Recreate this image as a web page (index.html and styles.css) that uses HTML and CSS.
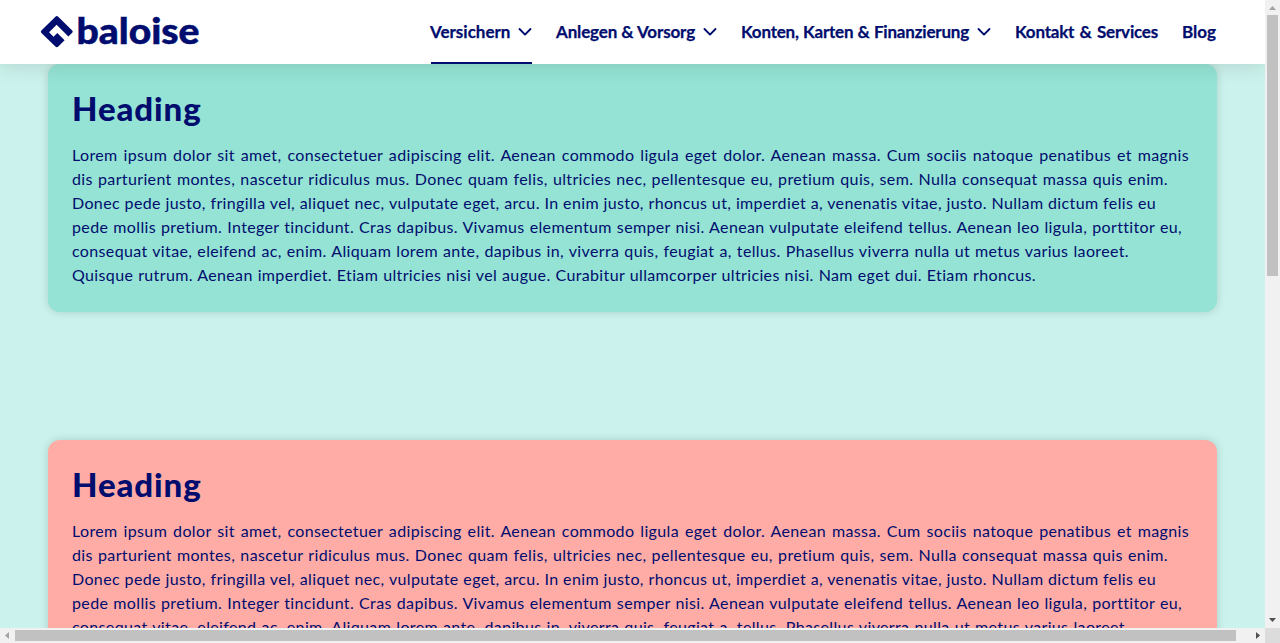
FILE: index.html
```html
<!DOCTYPE html>
<html lang="de">
<head>
<meta charset="utf-8">
<title>Baloise</title>
<link rel="stylesheet" href="styles.css">
</head>
<body>
<div class="window">
  <div class="viewport">
    <header class="navbar">
      <svg class="logo" width="162" height="44" viewBox="0 -4 162 44" role="img" aria-label="baloise">
        <path class="logo-mark" d="M15.4 2.7Q16.8 1.3 18.2 2.7L32.2 16.4Q33.4 17.6 32.2 18.8L28.4 22.6L16.6 10.7L9.1 18.2L13.5 22.7L17.3 18.9L24.6 26.3L18.3 32.6Q16.8 34.1 15.4 32.6L1.4 18.9Q.2 17.7 1.4 16.5Z"/>
        <text class="logo-text" x="36.500" y="29.500" textLength="123" lengthAdjust="spacingAndGlyphs">baloise</text>
      </svg>
      <nav class="menu">
        <a class="item active"><span class="t1">Versichern</span><svg class="chevron" width="14" height="10" viewBox="0 0 14 10"><path d="M1.5 2L7 7.6L12.5 2"/></svg></a>
        <a class="item"><span class="t2">Anlegen &amp; Vorsorg</span><svg class="chevron" width="14" height="10" viewBox="0 0 14 10"><path d="M1.5 2L7 7.6L12.5 2"/></svg></a>
        <a class="item"><span class="t3">Konten, Karten &amp; Finanzierung</span><svg class="chevron" width="14" height="10" viewBox="0 0 14 10"><path d="M1.5 2L7 7.6L12.5 2"/></svg></a>
        <a class="item"><span class="t4">Kontakt &amp; Services</span></a>
        <a class="item"><span class="t5">Blog</span></a>
      </nav>
    </header>
    <main class="content">
      <section class="card green">
        <h1>Heading</h1>
        <div class="copy">
          <div class="l1">Lorem ipsum dolor sit amet, consectetuer adipiscing elit. Aenean commodo ligula eget dolor. Aenean massa. Cum sociis natoque penatibus et magnis</div>
          <div class="l2">dis parturient montes, nascetur ridiculus mus. Donec quam felis, ultricies nec, pellentesque eu, pretium quis, sem. Nulla consequat massa quis enim.</div>
          <div class="l3">Donec pede justo, fringilla vel, aliquet nec, vulputate eget, arcu. In enim justo, rhoncus ut, imperdiet a, venenatis vitae, justo. Nullam dictum felis eu</div>
          <div class="l4">pede mollis pretium. Integer tincidunt. Cras dapibus. Vivamus elementum semper nisi. Aenean vulputate eleifend tellus. Aenean leo ligula, porttitor eu,</div>
          <div class="l5">consequat vitae, eleifend ac, enim. Aliquam lorem ante, dapibus in, viverra quis, feugiat a, tellus. Phasellus viverra nulla ut metus varius laoreet.</div>
          <div class="l6">Quisque rutrum. Aenean imperdiet. Etiam ultricies nisi vel augue. Curabitur ullamcorper ultricies nisi. Nam eget dui. Etiam rhoncus.</div>
        </div>
      </section>
      <section class="card red">
        <h1>Heading</h1>
        <div class="copy">
          <div class="l1">Lorem ipsum dolor sit amet, consectetuer adipiscing elit. Aenean commodo ligula eget dolor. Aenean massa. Cum sociis natoque penatibus et magnis</div>
          <div class="l2">dis parturient montes, nascetur ridiculus mus. Donec quam felis, ultricies nec, pellentesque eu, pretium quis, sem. Nulla consequat massa quis enim.</div>
          <div class="l3">Donec pede justo, fringilla vel, aliquet nec, vulputate eget, arcu. In enim justo, rhoncus ut, imperdiet a, venenatis vitae, justo. Nullam dictum felis eu</div>
          <div class="l4">pede mollis pretium. Integer tincidunt. Cras dapibus. Vivamus elementum semper nisi. Aenean vulputate eleifend tellus. Aenean leo ligula, porttitor eu,</div>
          <div class="l5">consequat vitae, eleifend ac, enim. Aliquam lorem ante, dapibus in, viverra quis, feugiat a, tellus. Phasellus viverra nulla ut metus varius laoreet.</div>
        </div>
      </section>
    </main>
  </div>
  <div class="bar vertical">
    <svg width="15" height="15"><path class="dim" d="M4 10h7L7.5 6z"/></svg>
    <div class="thumb"></div>
    <svg class="end" width="15" height="15"><path class="dark" d="M4 5h7L7.500 9z"/></svg>
  </div>
  <div class="bar horizontal">
    <svg width="15" height="15"><path class="dim" d="M9 4v7L5 7.500z"/></svg>
    <div class="thumb"></div>
    <svg class="end" width="15" height="15"><path class="dark" d="M6 4v7l4-3.500z"/></svg>
  </div>
  <div class="corner"></div>
</div>
</body>
</html>
```
FILE: styles.css
```css
* { box-sizing: border-box; }
body { margin: 0; overflow: hidden; font-family: Lato, "Liberation Sans", sans-serif; color: #000d6e; }
.window { display: grid; grid-template: 628px 15px / 1265px 15px; width: 1280px; height: 643px; }
.viewport { overflow: hidden; background: #cbf2ec; display: flex; flex-direction: column; }
.navbar { position: relative; z-index: 1; flex: none; height: 64px; background: #fff; box-shadow: 0 0 20px rgba(20, 20, 20, .15); display: flex; justify-content: space-between; padding: 0 48px 0 40px; }
.logo { margin-top: 10px; overflow: visible; }
.logo-mark { fill: #000d6e; }
.logo-text { font: 900 36px Lato, sans-serif; fill: #000d6e; stroke: #000d6e; stroke-width: .5; }
.menu { display: flex; gap: 24px; font-weight: 700; font-size: 17px; line-height: 24px; }
.item { display: flex; align-items: center; gap: 8px; height: 64px; white-space: nowrap; }
.item span { text-align-last: justify; -webkit-text-stroke: .25px #000d6e; padding-bottom: 1px; }
.active { background: linear-gradient(#000d6e, #000d6e) 1px 100% / 101px 2px no-repeat; }
.t1 { width: 80px; }
.t2 { width: 139px; letter-spacing: -.15px; }
.t3 { width: 228px; letter-spacing: -.2px; }
.t4 { width: 143px; letter-spacing: -.2px; }
.t5 { width: 35px; }
.chevron { fill: none; stroke: #000d6e; stroke-width: 1.9; stroke-linecap: round; stroke-linejoin: round; }
.content { padding: 0 48px; display: flex; flex-direction: column; gap: 128px; }
.card { height: 248px; flex: none; padding: 24px; border-radius: 12px; box-shadow: 0 0 10px rgba(0, 0, 0, .15); }
.green { background: #94e3d4; }
.red { background: #ffaca6; }
h1 { margin: 0 0 15px; font-size: 33px; line-height: 40px; font-weight: 900; letter-spacing: .9px; }
.copy { font-size: 16px; line-height: 24px; white-space: nowrap; letter-spacing: .36px; }
.copy div { text-align-last: justify; }
.l1 { width: 1117px; }
.l2 { width: 1096px; }
.l3 { width: 1084px; }
.l4 { width: 1110px; }
.l5 { width: 1057px; }
.l6 { width: 964px; }
.bar { display: flex; background: #f1f1f1; }
.bar svg { flex: none; }
.thumb { background: #c1c1c1; }
.end { margin-top: auto; }
.vertical { flex-direction: column; }
.vertical .thumb { width: 11px; height: 261px; margin-left: 2px; }
.horizontal .thumb { width: 1221px; height: 11px; margin-top: 2px; }
.horizontal .end { margin: 0 0 0 auto; }
.corner { background: #dcdcdc; }
.dim { fill: #a3a3a3; }
.dark { fill: #505050; }
```
